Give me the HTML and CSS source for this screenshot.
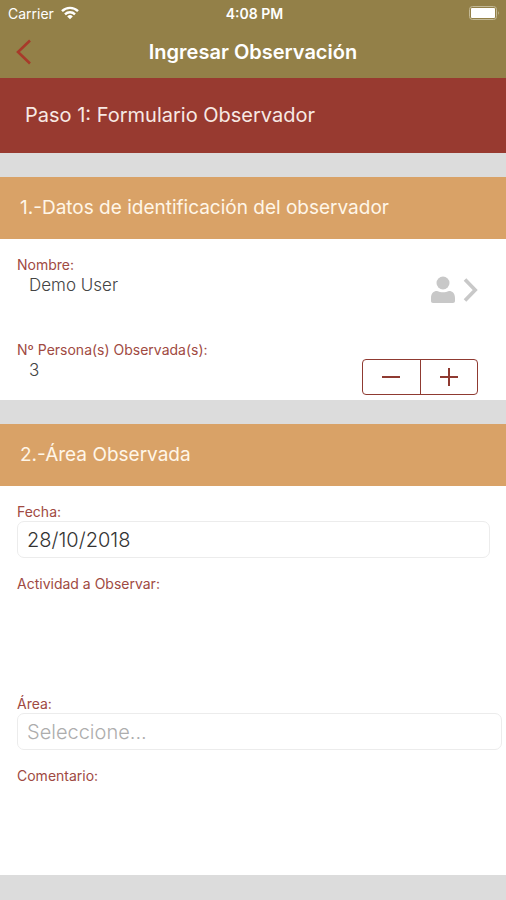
FILE: index.html
```
<!DOCTYPE html>
<html lang="es">
<head>
  <meta charset="utf-8">
  <meta name="viewport" content="width=device-width, initial-scale=1">
  <title>Ingresar Observación</title>
  <link rel="stylesheet" href="styles.css">
</head>
<body>
  <header class="top-bar">
    <div class="status-bar">
      <div class="carrier">
        <span>Carrier</span>
        <svg width="18" height="14" viewBox="0 0 18 14" fill="none" stroke="#fff" stroke-width="2.4">
          <path d="M1 5.2a11.4 11.4 0 0 1 16 0"/>
          <path d="M4 8.3a7.2 7.2 0 0 1 10 0"/>
          <path d="M9 13.2L6.2 10.4a4 4 0 0 1 5.6 0z" fill="#fff" stroke="none"/>
        </svg>
      </div>
      <span class="time">4:08 PM</span>
      <div class="battery">
        <svg width="32" height="14" viewBox="0 0 32 14">
          <rect x="0.5" y="0.5" width="27" height="13" rx="3" fill="none" stroke="#c3b996"/>
          <rect x="2" y="2" width="24" height="10" rx="1" fill="#fff"/>
          <path d="M29 5v4a3 3 0 0 0 0-4z" fill="#c3b996"/>
        </svg>
      </div>
    </div>
    <nav class="nav-bar">
      <button type="button" class="back-btn" aria-label="Volver">
        <svg width="16" height="26" viewBox="0 0 16 26" fill="none" stroke="#a83a2a" stroke-width="2.6">
          <path d="M14 1.5L2 13l12 11.5"/>
        </svg>
      </button>
      <h1>Ingresar Observación</h1>
    </nav>
  </header>

  <main>
    <h2 class="step-title">Paso 1: Formulario Observador</h2>

    <form>
      <section>
        <h3 class="section-title">1.-Datos de identificación del observador</h3>
        <div class="section-body">
          <div class="row person-row">
            <div>
              <span class="label">Nombre:</span>
              <p class="value">Demo User</p>
            </div>
            <button type="button" class="person-btn" aria-label="Elegir persona">
              <svg width="24" height="28" viewBox="0 0 24 28" fill="#c8c8c8">
                <circle cx="12" cy="7" r="6.5"/>
                <path d="M0 25v-3c0-4.5 2.5-7 6-7 2 1 4 1.3 6 1.3s4-.3 6-1.300c3.500 0 6 2.500 6 7v3c0 1.200-.8 2-2 2H2c-1.200 0-2-.8-2-2z"/>
              </svg>
              <svg width="15" height="24" viewBox="0 0 15 24" fill="none" stroke="#c8c8c8" stroke-width="3.6">
                <path d="M2 1.5L12.2 12 2 22.5"/>
              </svg>
            </button>
          </div>
          <div class="row count-row">
            <div>
              <label class="label" for="observed">Nº Persona(s) Observada(s):</label>
              <output class="value" id="observed">3</output>
            </div>
            <div class="stepper">
              <button type="button" id="minus" aria-label="Restar">
                <svg width="20" height="20" viewBox="0 0 20 20" stroke="#8f3a31" stroke-width="2"><path d="M1 10h18"/></svg>
              </button>
              <button type="button" id="plus" aria-label="Sumar">
                <svg width="20" height="20" viewBox="0 0 20 20" stroke="#8f3a31" stroke-width="2"><path d="M1 10h18M10 1v18"/></svg>
              </button>
            </div>
          </div>
        </div>
      </section>

      <section>
        <h3 class="section-title">2.-Área Observada</h3>
        <div class="section-body">
          <div class="form-group date-group">
            <label class="label" for="date">Fecha:</label>
            <input type="text" class="field" id="date" value="28/10/2018">
          </div>
          <div class="form-group">
            <label class="label" for="activity">Actividad a Observar:</label>
            <textarea id="activity"></textarea>
          </div>
          <div class="form-group">
            <label class="label" for="area">Área:</label>
            <select class="field placeholder" id="area">
              <option value="">Seleccione...</option>
            </select>
          </div>
          <div class="form-group">
            <label class="label" for="comment">Comentario:</label>
            <textarea id="comment"></textarea>
          </div>
        </div>
      </section>
    </form>
  </main>

  <script>
    var observed = document.getElementById('observed');

    function changeCount(step) {
      observed.textContent = Math.max(0, Number(observed.textContent) + step);
    }

    document.getElementById('minus').addEventListener('click', function () { changeCount(-1); });
    document.getElementById('plus').addEventListener('click', function () { changeCount(1); });
  </script>
</body>
</html>
```

FILE: styles.css
```
* {
  box-sizing: border-box;
}

body {
  margin: 0;
  font-family: Inter, "Liberation Sans", sans-serif;
  background-color: #dcdcdc;
}

h1, h2, h3, p {
  margin: 0;
}

button {
  padding: 0;
  border: none;
  background: none;
  cursor: pointer;
}

svg {
  display: block;
}

/* Header */
.top-bar {
  background-color: #938048;
  color: #fff;
}

.status-bar {
  display: grid;
  grid-template-columns: 1fr auto 1fr;
  align-items: center;
  height: 26px;
  padding: 0 5px 0 8px;
  font-size: 14px;
}

.carrier {
  display: flex;
  align-items: center;
  gap: 7px;
}

.time {
  font-weight: 600;
}

.battery {
  justify-self: end;
}

.nav-bar {
  display: grid;
  grid-template-columns: 1fr auto 1fr;
  align-items: center;
  height: 52px;
  padding: 0 16px;
}

.back-btn {
  justify-self: start;
}

.nav-bar h1 {
  font-size: 20px;
  font-weight: 600;
}

.step-title {
  padding: 24px 25px;
  background-color: #983a30;
  color: #f7e9e4;
  font-size: 20px;
  font-weight: 400;
  line-height: 27px;
}

/* Sections */
section {
  margin: 24px 0;
}

.section-title {
  padding: 18px 20px;
  background-color: #d9a267;
  color: #fff6e8;
  font-size: 19px;
  font-weight: 400;
  line-height: 26px;
}

.section-body {
  display: flex;
  flex-direction: column;
  gap: 17px;
  padding: 17px 4px 5px 17px;
  background-color: #fff;
}

.label {
  display: block;
  color: #a04a42;
  font-size: 14px;
  line-height: 18px;
}

.value {
  display: block;
  padding-left: 12px;
  color: #444;
  font-size: 17px;
  font-weight: 300;
  line-height: 22px;
}

.row {
  display: flex;
  justify-content: space-between;
  padding-right: 24px;
}

.person-row {
  min-height: 68px;
}

.person-btn {
  display: flex;
  align-items: center;
  gap: 8px;
}

.count-row {
  min-height: 54px;
}

.stepper {
  display: flex;
  align-self: flex-end;
  width: 116px;
  height: 36px;
  border: 1px solid #8f3a31;
  border-radius: 4px;
}

.stepper button {
  display: flex;
  flex: 1;
  align-items: center;
  justify-content: center;
}

.stepper button + button {
  border-left: 1px solid #8f3a31;
}

/* Fields */
.date-group {
  padding-right: 12px;
}

.field {
  display: block;
  width: 100%;
  height: 37px;
  padding: 0 9px;
  border: 1px solid #ececec;
  border-radius: 7px;
  background-color: #fff;
  color: #333;
  font-family: inherit;
  font-size: 20px;
  font-weight: 300;
  appearance: none;
}

.placeholder {
  color: #adadad;
}

textarea {
  display: block;
  width: 100%;
  height: 85px;
  padding: 0 9px;
  border: none;
  background: none;
  font-family: inherit;
  font-size: 17px;
  resize: none;
}
```
